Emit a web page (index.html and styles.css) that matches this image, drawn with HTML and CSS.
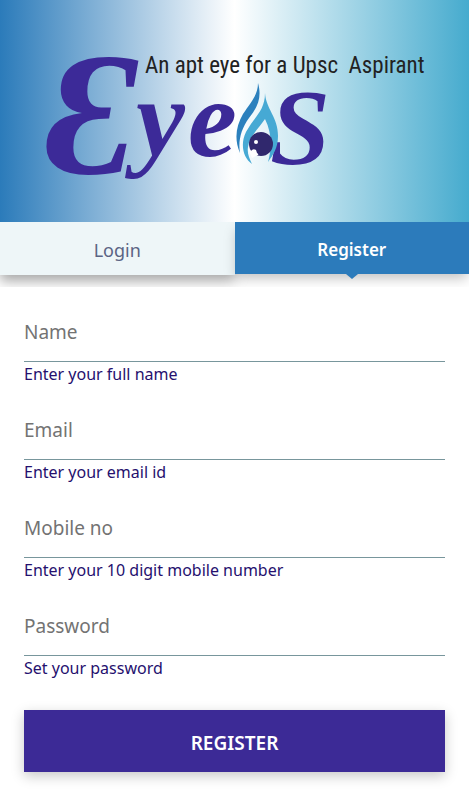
FILE: index.html
```html
<!DOCTYPE html>
<html lang="en">
<head>
  <meta charset="utf-8">
  <meta name="viewport" content="width=device-width, initial-scale=1">
  <title>Register</title>
  <link rel="stylesheet" href="styles.css">
</head>
<body>
  <header class="banner">
    <svg class="logo" viewBox="0 0 469 222" role="img" aria-label="Eyes: An apt eye for a Upsc Aspirant">
      <text class="tagline" x="145" y="73" xml:space="preserve">An apt eye for a Upsc  Aspirant</text>
      <text class="script-capital" x="46" y="173">Ɛ</text>
      <text class="script" x="136 188" y="156">ye</text>
      <text class="script-end" x="270" y="164">S</text>
      <path fill="#2b80bd" d="M258 83C262 97 258 107 249 118C241 129 238 141 240 153C234 139 236 126 243 114C251 102 258 95 258 83Z"/>
      <path fill="#46a9d4" d="M265 93C266 109 278 117 278 136C278 148 273 155 268 162C272 148 272 133 265 119C259 128 249 137 248 147C247 153 249 158 252 164C243 158 240 144 246 132C254 117 265 111 265 93Z"/>
      <circle fill="#30286d" cx="261" cy="144" r="12"/>
      <circle fill="#fff" cx="256" cy="142" r="2"/>
      <path fill="#fff" d="M248 149L251 151Q253 148 256 150L257 153Q259 154 258 155L252 158Z"/>
    </svg>
  </header>

  <nav class="tabs">
    <a class="tab" href="#login">Login</a>
    <a class="tab tab-active" href="#register" aria-current="page">Register</a>
  </nav>

  <form class="form" id="register">
    <div class="field">
      <input id="name" type="text" placeholder="Name">
      <label for="name">Enter your full name</label>
    </div>
    <div class="field">
      <input id="email" type="email" placeholder="Email">
      <label for="email">Enter your email id</label>
    </div>
    <div class="field">
      <input id="mobile" type="tel" placeholder="Mobile no">
      <label for="mobile">Enter your 10 digit mobile number</label>
    </div>
    <div class="field">
      <input id="password" type="password" placeholder="Password">
      <label for="password">Set your password</label>
    </div>
    <button class="submit" type="submit">REGISTER</button>
  </form>
</body>
</html>
```
FILE: styles.css
```css
* {
  box-sizing: border-box;
}

body {
  margin: 0;
  background: #fff;
  font-family: "Noto Sans", "Open Sans", sans-serif;
}

.banner {
  background: linear-gradient(90deg, #2b7bba 0%, #fff 50%, #46abce 100%);
}

.logo {
  display: block;
  width: 100%;
}

.tagline {
  font: 23px "Liberation Sans Narrow", "Roboto Condensed", "Open Sans Condensed", "DejaVu Sans Condensed", sans-serif;
  fill: #222;
}

.script-capital,
.script,
.script-end {
  font-family: "Liberation Serif", serif;
  font-style: italic;
  font-weight: 700;
  fill: #3c2a98;
}

.script-capital {
  font-size: 176px;
}

.script {
  font-size: 110px;
}

.script-end {
  font-size: 108px;
}

.tabs {
  display: grid;
  grid-template-columns: 1fr 1fr;
  padding-bottom: 12px;
  overflow: hidden;
}

.tab {
  position: relative;
  height: 53px;
  line-height: 56px;
  text-align: center;
  text-decoration: none;
  font-size: 18px;
  color: #5b6484;
  background: #eef6f8;
  box-shadow: 0 6px 12px rgba(0, 0, 0, 0.35);
}

.tab-active {
  height: 52px;
  font-size: 17px;
  font-weight: 600;
  color: #fff;
  background: #2c7bbb;
  box-shadow: 0 6px 12px -2px rgba(0, 0, 0, 0.25);
}

.tab-active::after {
  content: "";
  position: absolute;
  top: 100%;
  left: 50%;
  margin-left: -6px;
  border: 6px solid transparent;
  border-top: 5px solid #2c7bbb;
  border-bottom: 0;
}

.form {
  display: flex;
  flex-direction: column;
  gap: 16px;
  padding: 17px 24px 28px;
}

.field {
  display: flex;
  flex-direction: column;
}

.field input {
  width: 100%;
  height: 58px;
  padding: 0 0 2px;
  border: 0;
  border-bottom: 1px solid #78969c;
  border-radius: 0;
  outline: 0;
  background: transparent;
  font: inherit;
  font-size: 19px;
  color: #333;
}

.field input::placeholder {
  color: #737373;
  opacity: 1;
}

.field label {
  font-size: 16px;
  line-height: 24px;
  color: #25106e;
}

.submit {
  height: 62px;
  margin-top: 14px;
  padding-top: 4px;
  border: 0;
  background: #3c2a96;
  box-shadow: 0 4px 12px rgba(0, 0, 0, 0.22);
  font: inherit;
  font-size: 19px;
  font-weight: 600;
  color: #fff;
}
```
